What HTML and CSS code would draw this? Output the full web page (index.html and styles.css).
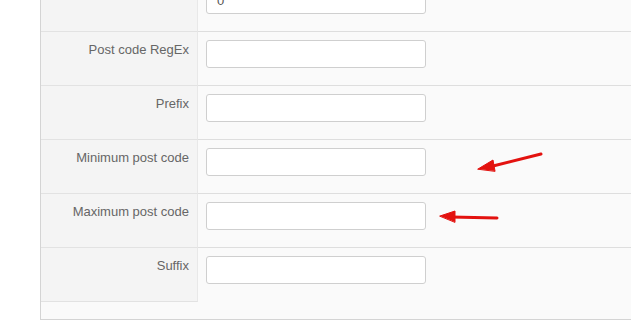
FILE: index.html
```html
<!DOCTYPE html>
<html lang="en">
<head>
  <meta charset="UTF-8">
  <title>Post code settings</title>
  <link rel="stylesheet" href="styles.css">
</head>
<body>
  <div class="panel">
    <div class="row">
      <label class="label-cell"></label>
      <div class="field-cell"><input type="text" class="text-input" value="0"></div>
    </div>
    <div class="row">
      <label class="label-cell">Post code RegEx</label>
      <div class="field-cell"><input type="text" class="text-input"></div>
    </div>
    <div class="row">
      <label class="label-cell">Prefix</label>
      <div class="field-cell"><input type="text" class="text-input"></div>
    </div>
    <div class="row">
      <label class="label-cell">Minimum post code</label>
      <div class="field-cell"><input type="text" class="text-input"></div>
    </div>
    <div class="row">
      <label class="label-cell">Maximum post code</label>
      <div class="field-cell"><input type="text" class="text-input"></div>
    </div>
    <div class="row last">
      <label class="label-cell">Suffix</label>
      <div class="field-cell"><input type="text" class="text-input"></div>
    </div>
    <div class="panel-footer"></div>

    <!-- annotation arrows -->
    <svg class="arrows" width="631" height="332" viewBox="0 0 631 332">
      <g fill="#e3120f" stroke="#e3120f" stroke-linecap="round">
        <line x1="540" y1="176" x2="488" y2="189" stroke-width="3"/>
        <polygon points="477,191 492,182 494,193" stroke-width="1"/>
        <line x1="496" y1="240" x2="450" y2="239" stroke-width="3"/>
        <polygon points="439,238 454,233 454,244" stroke-width="1"/>
      </g>
    </svg>
  </div>
</body>
</html>
```
FILE: styles.css
```css
body {
  margin: 0;
  padding: 0;
  background-color: #fff;
  font-family: "Liberation Sans", Arial, sans-serif;
  overflow: hidden;
}

.panel {
  position: relative;
  margin-top: -22px;
  margin-left: 40px;
  border-left: 1px solid #d4d4d4;
  border-bottom: 1px solid #d4d4d4;
  background-color: #fafafa;
}

.row {
  display: flex;
  height: 54px;
}

.label-cell {
  box-sizing: border-box;
  width: 157px;
  flex-shrink: 0;
  padding: 9px 8px 0 0;
  text-align: right;
  font-size: 13px;
  line-height: 18px;
  color: #666;
  background-color: #f4f4f4;
  border-right: 1px solid #e8e8e8;
  border-bottom: 1px solid #e2e2e2;
}

.field-cell {
  flex: 1;
  padding: 8px 0 0 8px;
  border-bottom: 1px solid #dedede;
}

.row.last .field-cell {
  border-bottom: none;
}

.text-input {
  box-sizing: border-box;
  display: block;
  width: 220px;
  height: 28px;
  padding: 0 10px;
  border: 1px solid #cfcfcf;
  border-radius: 3px;
  background-color: #fff;
  font-family: "Liberation Sans", Arial, sans-serif;
  font-size: 13px;
  color: #555;
  outline: none;
}

.panel-footer {
  height: 17px;
}

.arrows {
  position: absolute;
  left: -40px;
  top: 0;
  pointer-events: none;
}
```
